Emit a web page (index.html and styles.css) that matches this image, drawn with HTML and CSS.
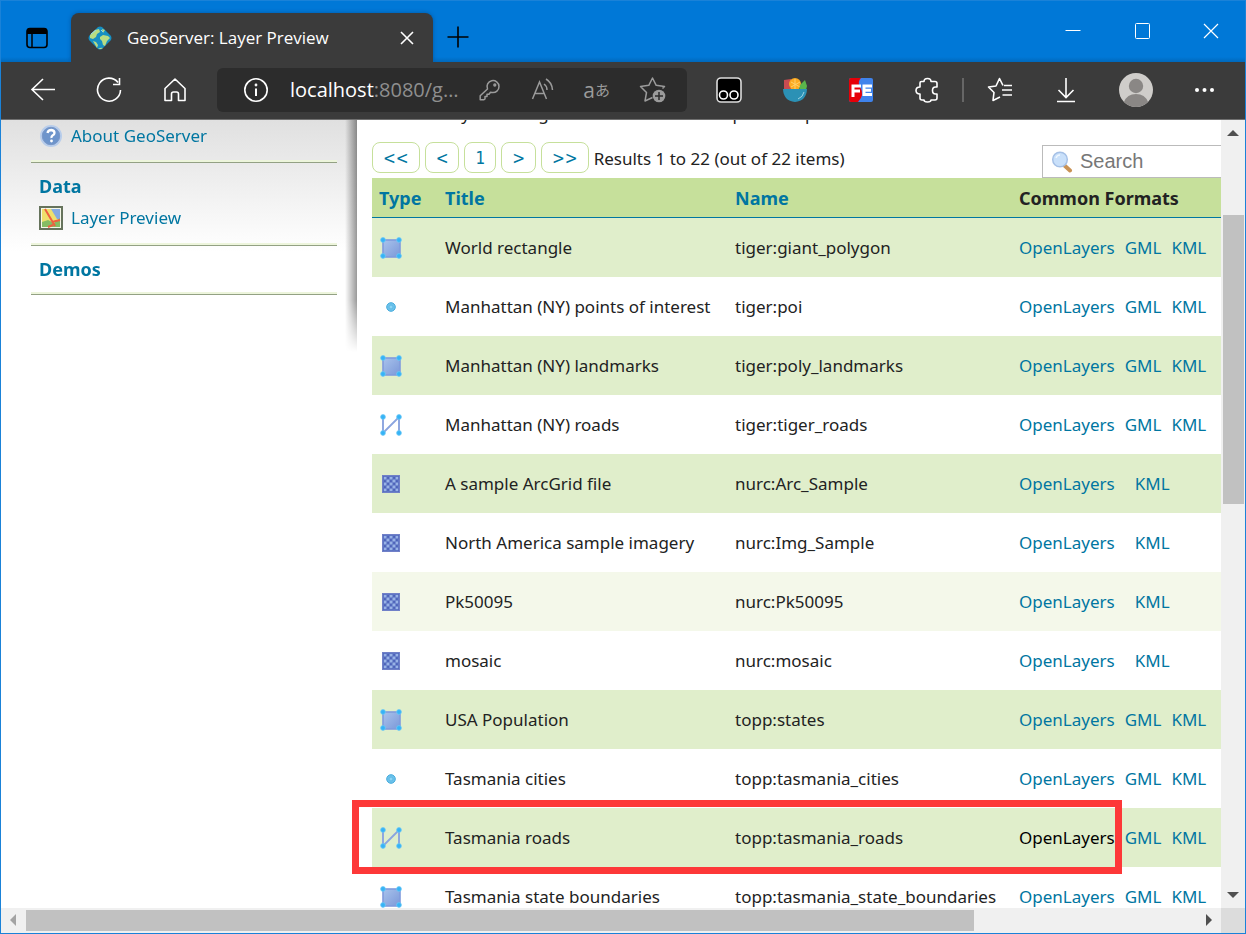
FILE: index.html
```html
<!DOCTYPE html>
<html lang="en">
<head>
<meta charset="utf-8">
<title>GeoServer: Layer Preview</title>
<link rel="stylesheet" href="styles.css">
</head>
<body>
<svg class="defs" aria-hidden="true">
  <defs>
    <linearGradient id="poly" x1="0" y1="0" x2="1" y2="1"><stop offset="0" stop-color="#a9c3ec"/><stop offset="1" stop-color="#7b98d8"/></linearGradient>
    <symbol id="node" viewBox="0 0 6 6"><circle cx="3" cy="3" r="2.4" fill="#35b3f6" stroke="#6fc9f5" stroke-width=".8"/></symbol>
    <symbol id="i-polygon" viewBox="0 0 24 24">
      <rect x="4" y="4" width="17" height="17" fill="url(#poly)" stroke="#819bdc" stroke-width="1.6"/>
      <use href="#node" x="1" y="1" width="6" height="6"/><use href="#node" x="17" y="1" width="6" height="6"/><use href="#node" x="1" y="17" width="6" height="6"/><use href="#node" x="17" y="17" width="6" height="6"/>
    </symbol>
    <symbol id="i-line" viewBox="0 0 24 24">
      <path d="M4 4v16L20 4v16" fill="none" stroke="#8ba4df" stroke-width="1.9"/>
      <use href="#node" x="1" y="1" width="6" height="6"/><use href="#node" x="17" y="1" width="6" height="6"/><use href="#node" x="1" y="17" width="6" height="6"/><use href="#node" x="17" y="17" width="6" height="6"/>
    </symbol>
    <symbol id="i-point" viewBox="0 0 24 24"><circle cx="12" cy="12" r="4.3" fill="#6dc3ec" stroke="#45abdc"/><circle cx="12" cy="12" r="2" fill="#8bd5f5" stroke="#55b5e2" stroke-width=".8"/></symbol>
    <pattern id="check" width="6" height="6" patternUnits="userSpaceOnUse" x="4.500" y="4.500"><circle cx="1.500" cy="1.500" r="1.700" fill="#9bb6e8"/><circle cx="4.500" cy="4.500" r="1.700" fill="#9bb6e8"/></pattern>
    <symbol id="i-raster" viewBox="0 0 24 24"><rect x="3" y="3" width="18" height="18" rx="1" fill="#4c62b9"/><rect x="4.500" y="4.500" width="15" height="15" fill="url(#check)"/><rect x="3.500" y="3.500" width="17" height="17" fill="none" stroke="#7080c8"/></symbol>
  </defs>
</svg>
<div class="window">
  <header class="titlebar">
    <button class="tabs-btn" aria-label="Tab actions"><svg width="24" height="24" viewBox="0 0 24 24"><rect x="2" y="2.5" width="20" height="19" rx="3" fill="none" stroke="#000" stroke-width="1.6"/><path d="M2 8V5a3 3 0 0 1 3-3h14a3 3 0 0 1 3 3v3z"/><path d="M7 8v13" stroke="#000" stroke-width="1.5"/></svg></button>
    <div class="tab">
      <svg width="24" height="24" viewBox="0 0 24 24"><path d="M10 1q2-1 4 0l9 9q1 2 0 4l-9 9q-2 1-4 0l-9-9q-1-2 0-4z" fill="#168fc3"/><path d="M2 9l5-5 4-1 1 3-3 2-1 3-3 2-3-1zM5 15l3 1 2 3-1 3zM12 11l3-2 5 1 2 2-3 3-2 5-2-1-1-4-2-2zM14 3l3 1-2 3zM10 23q3-2 5-1l-2 1z" fill="#b8dc83"/><path d="M3 8l5-4M13 4l2 2" stroke="#8fd5ee"/></svg>
      <span class="tab-title">GeoServer: Layer Preview</span>
      <button aria-label="Close tab"><svg width="14" height="14" viewBox="0 0 14 14" fill="none" stroke="#fff" stroke-width="1.6"><path d="M1 1l12 12M13 1L1 13"/></svg></button>
    </div>
    <button class="new-tab" aria-label="New tab"><svg width="22" height="22" viewBox="0 0 22 22" stroke="#000" stroke-width="1.6"><path d="M11 .5v21M.5 11h21"/></svg></button>
    <div class="controls">
      <button aria-label="Minimize"><svg width="16" height="16" viewBox="0 0 16 16" fill="none" stroke="#fff"><path d="M.5 7.500h15"/></svg></button>
      <button aria-label="Maximize"><svg width="16" height="16" viewBox="0 0 16 16" fill="none" stroke="#fff"><rect x="1.500" y=".5" width="14" height="15" rx="1"/></svg></button>
      <button aria-label="Close"><svg width="16" height="16" viewBox="0 0 16 16" fill="none" stroke="#fff" stroke-width="1.200"><path d="M1 1l14 14M15 1L1 15"/></svg></button>
    </div>
  </header>
  <nav class="toolbar" aria-label="Browser">
    <div class="nav-buttons">
      <button aria-label="Back"><svg width="26" height="26" viewBox="0 0 26 26"><path d="M25 12.500H2M13 2L2 12.500 13 23"/></svg></button>
      <button aria-label="Refresh"><svg width="26" height="26" viewBox="0 0 26 26"><path d="M24.500 13A11.500 11.500 0 1 1 22 5.500M23.500 1v6.500H17"/></svg></button>
      <button aria-label="Home"><svg width="26" height="26" viewBox="0 0 26 26"><path d="M3 11.500L13 2l10 9.500V23.500h-6.500V17a2 2 0 0 0-2-2h-3a2 2 0 0 0-2 2v6.500H3z" stroke-linejoin="round"/></svg></button>
    </div>
    <div class="address">
      <button aria-label="Site information"><svg width="24" height="24" viewBox="0 0 24 24"><circle cx="12" cy="12" r="11.200"/><path d="M12 10.500V18" stroke-width="2"/><circle cx="12" cy="7" r=".6"/></svg></button>
      <span class="url"><b>localhost</b>:8080/g…</span>
      <button class="dim" aria-label="Passwords"><svg width="22" height="22" viewBox="0 0 22 22"><path d="M8.500 10A6 6 0 1 1 13 13.500l-1.500-.2-1.500 2H8v2.200H6V20l-1 .7H1.200v-4z" stroke-linejoin="round"/><circle cx="15.800" cy="6" r=".9"/></svg></button>
      <button class="dim" aria-label="Read aloud"><svg width="24" height="24" viewBox="0 0 24 24"><path d="M2.500 21L9.500 4l7 17M5 15.500h9M14 6q3 2 3 6M16 1q6 3.500 6.500 11"/></svg></button>
      <button class="dim translate" aria-label="Translate"><span>a</span><span class="kana" lang="ja">あ</span></button>
      <button class="dim" aria-label="Add to favorites"><svg width="28" height="28" viewBox="0 0 28 28"><path d="M13.500 21.500L6 25l1.500-8.500L1.500 10.500l8.300-1.200L13.500 2l3.700 7.300 8.300 1.200-2 2" stroke-linejoin="round"/><circle class="badge" cx="20" cy="20" r="6.300"/><path class="plus" d="M16 20h8M20 16v8"/></svg></button>
    </div>
    <div class="extensions">
      <button aria-label="Tampermonkey"><svg width="26" height="26" viewBox="0 0 26 26"><rect x="1" y="1" width="24" height="24" rx="4" fill="#000" stroke="#ddd"/><circle cx="7.500" cy="18" r="4"/><circle cx="18" cy="18" r="4"/></svg></button>
      <button aria-label="Salad"><svg width="26" height="26" viewBox="0 0 26 26" stroke="none"><path d="M2 3l7-1 3 11H2z" fill="#c94b51"/><circle cx="13" cy="7" r="6" fill="#fdab22"/><path class="slice" d="M13 2v10M9 5l9 5M9 10l9-5"/><path d="M18 8l5-5 2 6-1 4h-7z" fill="#5ab54b"/><path d="M1 12h24q-.5 12-12 13Q1.500 24 1 12" fill="#2b91b5"/><path class="shine" d="M22 15q-1 5-6 7"/></svg></button>
      <button aria-label="FeHelper"><svg width="26" height="26" viewBox="0 0 26 26" stroke="none"><rect x="1" y="1" width="24" height="24" rx="2" fill="#3f83ec"/><path d="M3 1h10q-4 4-1 9 5 8-2 15H3q-2 0-2-2V3q0-2 2-2" fill="#e60008"/><path class="fe" d="M5 20V9h8M5 14h7M24 9h-8v8.500h8M16 13.300h7"/></svg></button>
      <button aria-label="Extensions"><svg width="26" height="26" viewBox="0 0 26 26"><path d="M7.500 4.500H10q0-3 3.500-3t3.500 3h4q2 0 2 2V10h-1.500q-3 0-3 3.500t3 3.500H23v4q0 2-2 2h-4q0 2-3.500 2T10 23H8q-2 0-2-2v-4q-4 0-4-3.500T6 10V6q0-1.500 1.500-1.500z" stroke-linejoin="round"/></svg></button>
    </div>
    <span class="divider"></span>
    <div class="extensions tail">
      <button aria-label="Favorites"><svg width="26" height="26" viewBox="0 0 26 26"><path d="M13 20l-7 3.500 1-8L1.500 10 9 9l3.500-7.500L16 8.500M15.500 18H25M15 13h10M17 8.500h8" stroke-linejoin="round"/></svg></button>
      <button aria-label="Downloads"><svg width="26" height="26" viewBox="0 0 26 26"><path d="M13 1v19M5.500 13l7.500 7.500 7.500-7.500M4 24.500h18"/></svg></button>
      <button aria-label="Profile"><svg width="34" height="34" viewBox="0 0 34 34" stroke="none"><circle cx="17" cy="17" r="17" fill="#cfcdca"/><circle cx="17" cy="13" r="7.200" fill="#8a8785"/><path d="M5 29q3-8 12-8t12 8a17 17 0 0 1-24 0" fill="#8a8785"/></svg></button>
      <button aria-label="Settings and more"><svg width="26" height="26" viewBox="0 0 26 26" stroke="none"><g fill="#fff"><circle cx="4" cy="13" r="2"/><circle cx="11.500" cy="13" r="2"/><circle cx="19" cy="13" r="2"/></g></svg></button>
    </div>
  </nav>
  <div class="viewport">
    <div class="page">
      <aside class="sidebar">
        <section>
          <a href="#"><svg width="24" height="24" viewBox="0 0 24 24"><circle cx="12" cy="12" r="11" fill="#b8cdeb"/><circle cx="12" cy="12" r="8.700" fill="#6d94cb" stroke="#7897c8"/><path d="M8.500 9q.5-3 4-3 3 .5 3 3 0 1.500-2 2.500-1.200.7-1 2.500" fill="none" stroke="#fff" stroke-width="2.300"/><circle cx="12.500" cy="17" r="1.400" fill="#fff"/></svg>About GeoServer</a>
        </section>
        <section>
          <h2>Data</h2>
          <a href="#"><svg width="24" height="24" viewBox="0 0 24 24"><rect x="1" y="1" width="22" height="22" fill="#f4f8ea" stroke="#66735c" stroke-width="2"/><path d="M3 3h18v18H3z" fill="#efe06c"/><path d="M12 3h9v10h-3z" fill="#86aae0"/><path d="M3 16l6-2 6 3 6-5v9H3z" fill="#85bd63"/><path d="M6 3l10 17M13 16l8-2M14 19l-5 2" fill="none" stroke="#ee6040" stroke-width="2"/></svg>Layer Preview</a>
        </section>
        <section>
          <h2>Demos</h2>
        </section>
      </aside>
      <main class="main">
        <p class="intro">List of all layers configured in GeoServer and provides previews in various formats for each.</p>
        <div class="pager">
          <a href="#">&lt;&lt;</a><a href="#">&lt;</a><a href="#">1</a><a href="#">&gt;</a><a href="#">&gt;&gt;</a>
          <span>Results 1 to 22 (out of 22 items)</span>
          <label class="search"><svg width="22" height="22" viewBox="0 0 22 22"><path d="M13.500 14.500l5.500 5" stroke="#c99255" stroke-width="4" stroke-linecap="round"/><circle cx="9" cy="8.500" r="7.300" fill="#c9e0fa" stroke="#a5c0e6" stroke-width="1.500"/><path d="M5 7q1-3 4-3" fill="none" stroke="#eef7ff" stroke-width="1.500"/></svg><input type="text" placeholder="Search" aria-label="Search"></label>
        </div>
        <table>
          <colgroup><col class="c-type"><col class="c-title"><col class="c-name"><col></colgroup>
          <thead><tr><th><a href="#">Type</a></th><th><a href="#">Title</a></th><th><a href="#">Name</a></th><th>Common Formats</th></tr></thead>
          <tbody>
            <tr><td><svg><use href="#i-polygon"/></svg></td><td>World rectangle</td><td>tiger:giant_polygon</td><td><div class="formats"><a href="#">OpenLayers</a><a href="#">GML</a><a href="#">KML</a></div></td></tr>
            <tr><td><svg><use href="#i-point"/></svg></td><td>Manhattan (NY) points of interest</td><td>tiger:poi</td><td><div class="formats"><a href="#">OpenLayers</a><a href="#">GML</a><a href="#">KML</a></div></td></tr>
            <tr><td><svg><use href="#i-polygon"/></svg></td><td>Manhattan (NY) landmarks</td><td>tiger:poly_landmarks</td><td><div class="formats"><a href="#">OpenLayers</a><a href="#">GML</a><a href="#">KML</a></div></td></tr>
            <tr><td><svg><use href="#i-line"/></svg></td><td>Manhattan (NY) roads</td><td>tiger:tiger_roads</td><td><div class="formats"><a href="#">OpenLayers</a><a href="#">GML</a><a href="#">KML</a></div></td></tr>
            <tr><td><svg><use href="#i-raster"/></svg></td><td>A sample ArcGrid file</td><td>nurc:Arc_Sample</td><td><div class="formats"><a href="#">OpenLayers</a><span></span><a href="#">KML</a></div></td></tr>
            <tr><td><svg><use href="#i-raster"/></svg></td><td>North America sample imagery</td><td>nurc:Img_Sample</td><td><div class="formats"><a href="#">OpenLayers</a><span></span><a href="#">KML</a></div></td></tr>
            <tr class="fading"><td><svg><use href="#i-raster"/></svg></td><td>Pk50095</td><td>nurc:Pk50095</td><td><div class="formats"><a href="#">OpenLayers</a><span></span><a href="#">KML</a></div></td></tr>
            <tr><td><svg><use href="#i-raster"/></svg></td><td>mosaic</td><td>nurc:mosaic</td><td><div class="formats"><a href="#">OpenLayers</a><span></span><a href="#">KML</a></div></td></tr>
            <tr><td><svg><use href="#i-polygon"/></svg></td><td>USA Population</td><td>topp:states</td><td><div class="formats"><a href="#">OpenLayers</a><a href="#">GML</a><a href="#">KML</a></div></td></tr>
            <tr><td><svg><use href="#i-point"/></svg></td><td>Tasmania cities</td><td>topp:tasmania_cities</td><td><div class="formats"><a href="#">OpenLayers</a><a href="#">GML</a><a href="#">KML</a></div></td></tr>
            <tr class="marked"><td><span class="marker"></span><svg><use href="#i-line"/></svg></td><td>Tasmania roads</td><td>topp:tasmania_roads</td><td><div class="formats"><a class="active" href="#">OpenLayers</a><a href="#">GML</a><a href="#">KML</a></div></td></tr>
            <tr><td><svg><use href="#i-polygon"/></svg></td><td>Tasmania state boundaries</td><td>topp:tasmania_state_boundaries</td><td><div class="formats"><a href="#">OpenLayers</a><a href="#">GML</a><a href="#">KML</a></div></td></tr>
          </tbody>
        </table>
      </main>
    </div>
    <div class="vbar">
      <svg viewBox="0 0 24 24"><path d="M6 16h12l-6-6z"/></svg>
      <div class="track"><span class="gap-top"></span><span class="thumb v"></span><span class="gap-bottom"></span></div>
      <svg viewBox="0 0 24 24"><path d="M6 8h12l-6 6z"/></svg>
    </div>
    <div class="hbar">
      <svg class="off" viewBox="0 0 24 24"><path d="M15 6v12L9 12z"/></svg>
      <div class="track"><span class="thumb h"></span><span class="gap-right"></span></div>
      <svg viewBox="0 0 24 24"><path d="M9 6v12l6-6z"/></svg>
    </div>
    <div class="corner"></div>
  </div>
</div>
</body>
</html>
```
FILE: styles.css
```css
* { box-sizing: border-box; }
body { margin: 0; font: 17px/24px "Noto Sans", "DejaVu Sans Condensed", sans-serif; color: #222; }
a { color: #0076a1; text-decoration: none; }
button { border: 0; padding: 0; background: none; display: flex; align-items: center; justify-content: center; }
svg { display: block; flex: none; }
.defs { position: absolute; width: 0; height: 0; }
.window { height: 100vh; display: flex; flex-direction: column; border: 1px solid #1a82d8; overflow: hidden; }

.titlebar { flex: none; height: 61px; display: flex; background: linear-gradient(#0078d7 56px, #0068bb); }
.tabs-btn { width: 70px; padding: 12px 0 0 2px; }
.tab { width: 362px; margin-top: 12px; padding: 0 19px 0 17px; display: flex; align-items: center; gap: 15px; border-radius: 8px 8px 0 0; background: #3b3b3b; color: #fff; font: 17px/24px "Open Sans", sans-serif; box-shadow: 0 0 4px #0057a3; }
.tab-title { flex: 1; white-space: nowrap; }
.new-tab { width: 50px; padding-top: 10px; }
.controls { margin-left: auto; display: flex; height: 60px; }
.controls button { width: 69px; }

.toolbar { flex: none; height: 58px; padding-bottom: 2px; display: flex; align-items: center; background: #3b3b3b; border-bottom: 1px solid #707070; color: #fff; }
.toolbar svg { fill: none; stroke: #fff; stroke-width: 1.6px; }
.toolbar svg[stroke="none"] { stroke: none; }
.toolbar .fe { fill: none; stroke: #fff; stroke-width: 3px; }
.slice { fill: none; stroke: #ffd16b; stroke-width: 1px; }
.shine { fill: none; stroke: #9cd5e5; stroke-width: 1px; }
.nav-buttons { display: flex; padding: 0 29px; gap: 40px; }
.address { flex: 0 0 470px; height: 44px; padding: 0 20px 0 27px; display: flex; align-items: center; border-radius: 6px; background: #2c2c2c; }
.url { margin: 0 auto 0 22px; font: 20px/28px "Open Sans", sans-serif; color: #8f8f8f; white-space: nowrap; }
.url b { font-weight: 400; color: #fff; }
.dim { color: #9b9b9b; }
.dim + .dim { margin-left: 29px; }
.toolbar .dim svg { stroke: #9b9b9b; stroke-width: 1.5px; }
.dim .badge { fill: #9b9b9b; stroke: none; }
.dim .plus { stroke: #2c2c2c; }
.translate { font: 21px/24px "Open Sans", sans-serif; }
.kana { font: 15px/24px "Noto Sans CJK JP", sans-serif; }
.extensions { display: flex; align-items: center; gap: 40px; padding-left: 29px; }
.divider { width: 2px; height: 24px; margin-left: 22px; background: #666; }
.tail { padding-left: 23px; }

.viewport { flex: 1; min-height: 0; display: grid; grid-template: minmax(0, 1fr) 25px / minmax(0, 1fr) 24px; }
.page { overflow: hidden; display: flex; background: #fff; }
.sidebar { flex: 0 0 356px; height: 232px; padding: 4px 20px 0 30px; background: linear-gradient(90deg, transparent 344px, #0006) no-repeat, linear-gradient(#e0e0e0, #fff 132px); -webkit-mask-image: linear-gradient(#000 180px, transparent); mask-image: linear-gradient(#000 180px, transparent); }
.sidebar section { padding: 0 8px 15px; border-bottom: 1px solid #93a184; box-shadow: inset 0 -2px #edf5dc; }
.sidebar section:first-child { padding-bottom: 14px; }
.sidebar section:last-child { padding-bottom: 5px; }
.sidebar h2 { margin: 0; padding: 11px 0 8px; font-size: 18px; line-height: 24px; color: #0076a1; }
.sidebar a { display: flex; gap: 8px; align-items: center; }

.main { flex: 1; min-width: 0; padding-left: 15px; }
.intro { margin: -18px 0 16px; height: 24px; white-space: nowrap; overflow: hidden; }
.pager { display: flex; height: 36px; gap: 5px; }
.pager > a { height: 31px; padding: 0 10px; border: 1px solid #c6e09b; border-radius: 8px; background: #fff; font: 17px/31px "DejaVu Sans Condensed", sans-serif; }
.pager > span { line-height: 33px; white-space: nowrap; }
.search { margin: 3px 0 0 auto; width: 179px; height: 33px; display: flex; align-items: center; padding-left: 8px; gap: 7px; border: 1px solid #bbb; border-right: 0; }
.search input { flex: 1; min-width: 0; height: 28px; border: 0; padding: 0; outline: 0; background: none; font: 20px/24px "Liberation Sans", sans-serif; }
.search input::placeholder { color: #777; }
table { width: 100%; table-layout: fixed; border-collapse: separate; border-spacing: 0; white-space: nowrap; }
.c-type { width: 66px; }
.c-title { width: 290px; }
.c-name { width: 284px; }
th { height: 40px; padding: 0 7px; font-size: 18px; text-align: left; background: #c6e09b; border-bottom: 1px solid #0076a1; }
td { height: 59px; padding: 0 7px; }
td svg { width: 24px; height: 24px; }
tbody tr:nth-child(odd) { background: #e0eecb; }
tbody tr.fading { background: #f4f8ea; }
.formats { display: flex; gap: 10px; }
.formats .active { color: #000; }
.marked { position: relative; }
.marker { position: absolute; z-index: 1; left: -20px; top: -8px; bottom: -7px; width: 770px; border: 7px solid #fd3838; pointer-events: none; }

.vbar, .hbar { display: flex; background: #f0f0f0; }
.vbar { flex-direction: column; }
.vbar svg, .hbar svg { width: 24px; height: 24px; fill: #505050; }
.hbar .off { fill: #a3a3a3; }
.track { flex: 1; display: flex; }
.vbar .track { flex-direction: column; padding: 0 1px 0 2px; }
.hbar .track { padding: 2px 0 2px 1px; }
.thumb { background: #c1c1c1; }
.v { flex: 289; }
.gap-top { flex: 71; }
.gap-bottom { flex: 380; }
.h { flex: 948; }
.gap-right { flex: 223; }
.corner { background: #dcdcdc; }
```
